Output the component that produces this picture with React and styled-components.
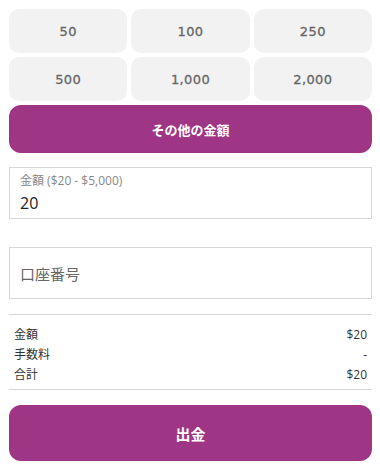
import styled, { createGlobalStyle } from "styled-components";

const GlobalStyle = createGlobalStyle`
  body {
    margin: 0;
    background: #fff;
    font-family: "Open Sans", "Noto Sans CJK JP", sans-serif;
  }
`;

const amounts = ["50", "100", "250", "500", "1,000", "2,000"];

const summary = [
  { label: "金額", value: "$20" },
  { label: "手数料", value: "-" },
  { label: "合計", value: "$20" },
];

export default function App() {
  return (
    <>
      <GlobalStyle />
      <Page>
        <AmountGrid>
          {amounts.map((a) => (
            <AmountTile key={a}>{a}</AmountTile>
          ))}
        </AmountGrid>
        <PurpleButton $height={48}>その他の金額</PurpleButton>

        <Field $mt={14}>
          <FieldLabel>金額 ($20 - $5,000)</FieldLabel>
          <FieldValue>20</FieldValue>
        </Field>

        <Field $mt={28} $center>
          <Placeholder>口座番号</Placeholder>
        </Field>

        <Summary>
          {summary.map((row) => (
            <SummaryRow key={row.label}>
              <span>{row.label}</span>
              <span>{row.value}</span>
            </SummaryRow>
          ))}
        </Summary>

        <PurpleButton $height={56} $mt={15} $size={15}>
          出金
        </PurpleButton>
      </Page>
    </>
  );
}

const Page = styled.div`
  padding: 9px 8px 0 9px;
  display: flex;
  flex-direction: column;
`;

const AmountGrid = styled.div`
  display: grid;
  grid-template-columns: repeat(3, 1fr);
  grid-auto-rows: 44px;
  gap: 4px;
`;

const AmountTile = styled.button`
  border: none;
  background: #f2f2f2;
  border-radius: 10px;
  color: #666;
  font-family: "DejaVu Sans", sans-serif;
  font-weight: 400;
  font-size: 13px;
  letter-spacing: 0.4px;
  -webkit-text-stroke: 0.3px #666;
  padding: 0;
`;

const PurpleButton = styled.button`
  margin-top: ${(p) => p.$mt ?? 4}px;
  height: ${(p) => p.$height}px;
  border: none;
  border-radius: 12px;
  background: #9e3585;
  color: #fff;
  font-family: "Noto Sans CJK JP", sans-serif;
  font-weight: 700;
  font-size: ${(p) => p.$size ?? 13}px;
  padding: 0;
`;

const Field = styled.div`
  margin-top: ${(p) => p.$mt}px;
  height: 52px;
  box-sizing: border-box;
  border: 1px solid #d6d6d6;
  padding: 0 10px;
  display: flex;
  flex-direction: column;
  justify-content: ${(p) => (p.$center ? "center" : "flex-start")};
  padding-top: ${(p) => (p.$center ? 0 : 5)}px;
`;

const FieldLabel = styled.div`
  font-size: 12px;
  color: #888;
  line-height: 16px;
  font-family: "Open Sans", "Noto Sans CJK JP", sans-serif;
`;

const FieldValue = styled.div`
  font-size: 16px;
  color: #222;
  line-height: 24px;
  margin-top: 2px;
`;

const Placeholder = styled.div`
  font-size: 15px;
  color: #666;
  font-family: "Noto Sans CJK JP", sans-serif;
`;

const Summary = styled.div`
  margin-top: 15px;
  border-top: 1px solid #d6d6d6;
  border-bottom: 1px solid #d6d6d6;
  padding: 9px 5px 5px 5px;
`;

const SummaryRow = styled.div`
  display: flex;
  justify-content: space-between;
  height: 20px;
  align-items: center;
  font-size: 12px;
  color: #333;
  font-family: "Open Sans", "Noto Sans CJK JP", sans-serif;
`;
